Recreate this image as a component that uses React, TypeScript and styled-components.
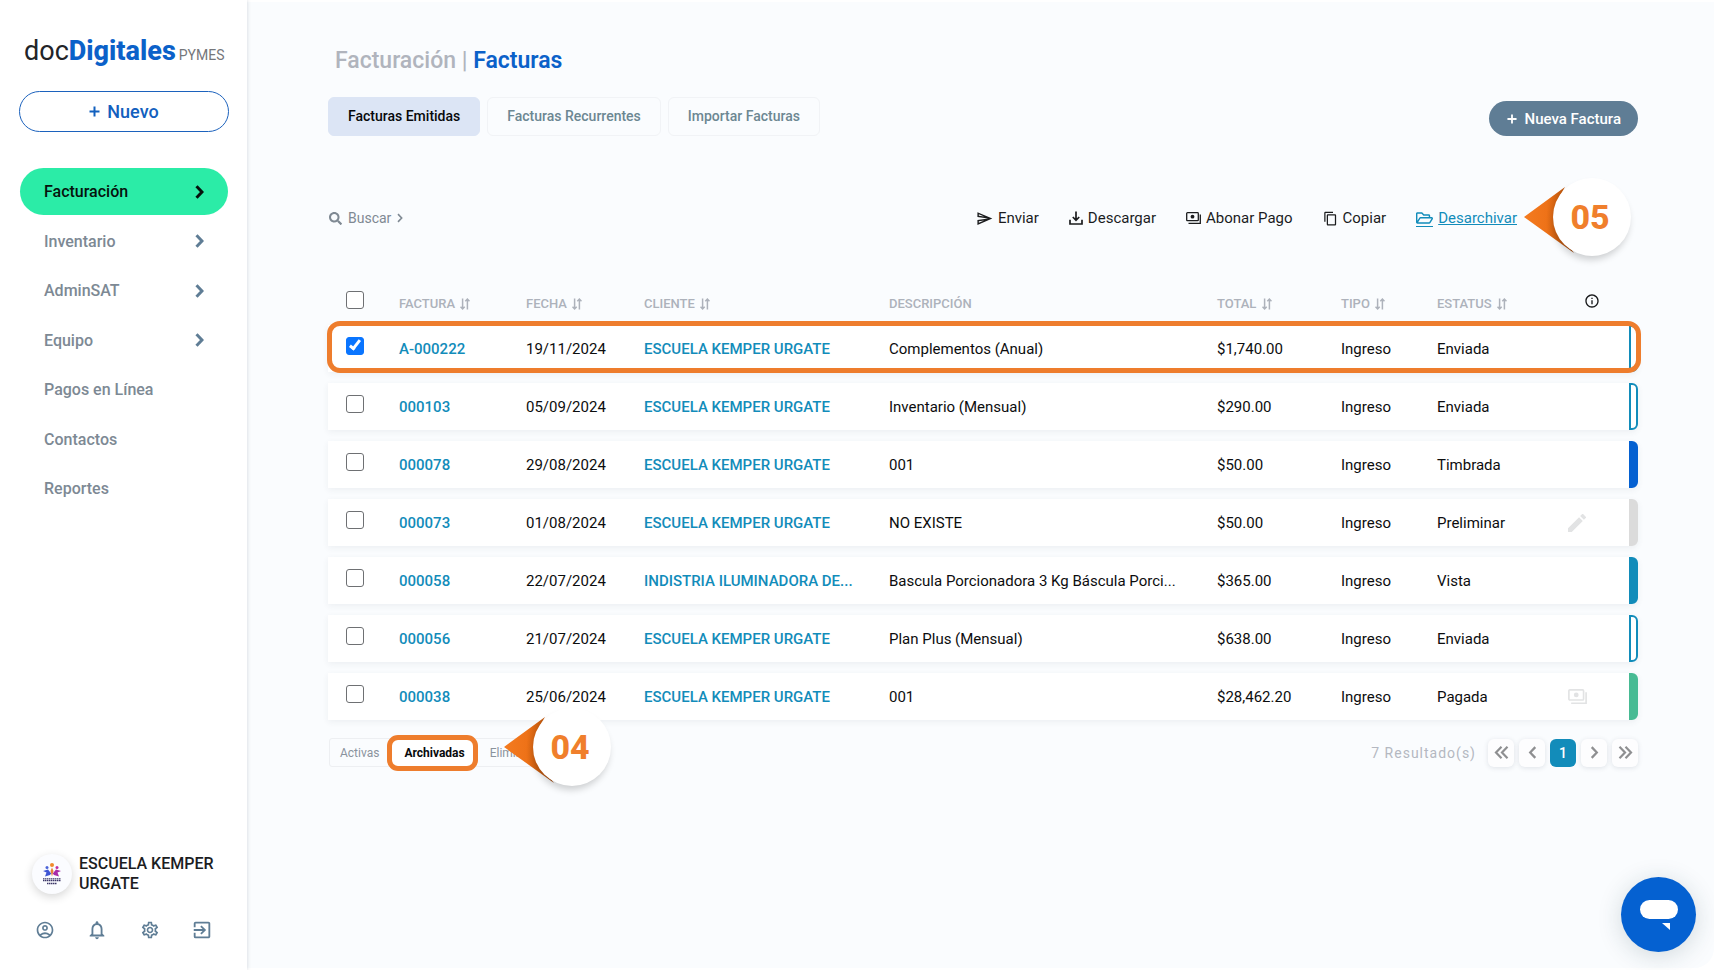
import React from "react";
import styled, { createGlobalStyle, css } from "styled-components";
import {
  MdOutlineAccountCircle,
  MdNotificationsNone,
  MdOutlineSettings,
  MdOutlineExitToApp,
  MdOutlineSend,
  MdContentCopy,
  MdInfoOutline,
} from "react-icons/md";
import { FaSearch, FaRegFolderOpen } from "react-icons/fa";

const GlobalStyle = createGlobalStyle`
  *, *::before, *::after { box-sizing: border-box; }
  body {
    margin: 0;
    background: #ffffff;
    color: #0c0d0e;
    font-family: Roboto, "Liberation Sans", sans-serif;
    font-size: 15px;
  }
  button { font-family: inherit; cursor: pointer; }
  a { text-decoration: none; }
`;

const accent = "#ee7d2d";
const teal = "#128cba";
const slate = "#5f7d95";

const Page = styled.div`
  display: flex;
  min-height: 100vh;
`;

/* ---------- Sidebar ---------- */

const Sidebar = styled.aside`
  display: flex;
  flex-direction: column;
  flex: none;
  width: 247px;
  padding: 33px 18px 28px 19px;
  background: #ffffff;
  box-shadow: 0 0 4px rgba(40, 60, 80, 0.2);
  z-index: 1;
`;

const Logo = styled.a`
  display: flex;
  align-items: baseline;
  height: 36px;
  padding-left: 5px;
  line-height: 36px;
  color: #222428;
  font-size: 27px;
  font-weight: 400;
  white-space: nowrap;

  strong { color: #0b61c9; font-weight: 800; }
  small {
    margin-left: 3px;
    color: #75777b;
    font-size: 14px;
    font-weight: 400;
  }
`;

const NewButton = styled.button`
  display: flex;
  align-items: center;
  justify-content: center;
  gap: 7px;
  height: 41px;
  margin-top: 22px;
  border: 1px solid #1c62bd;
  border-radius: 21px;
  background: #ffffff;
  color: #1260be;
  font-size: 18px;
  font-weight: 500;
`;

const Nav = styled.nav`
  display: flex;
  flex-direction: column;
  justify-content: space-between;
  height: 344px;
  margin: 36px 1px 0;
`;

const NavItem = styled.a<{ $active?: boolean }>`
  display: flex;
  align-items: center;
  justify-content: space-between;
  height: 47px;
  padding: 0 24px;
  border-radius: 24px;
  font-size: 16px;
  font-weight: 500;
  color: ${(p) => (p.$active ? "#06120d" : "#7d8994")};
  background: ${(p) => (p.$active ? "#2beca7" : "transparent")};
  svg { color: ${(p) => (p.$active ? "#06120d" : slate)}; }
`;

const Account = styled.div`
  display: flex;
  align-items: center;
  gap: 7px;
  margin-top: auto;
  padding-left: 13px;
  font-size: 16px;
  line-height: 20px;
  font-weight: 500;
  color: #1c1d1f;
`;

const Avatar = styled.span`
  display: grid;
  place-items: center;
  flex: none;
  width: 40px;
  height: 40px;
  border-radius: 50%;
  background: #fbfcff;
  box-shadow: 0 3px 10px rgba(0, 0, 0, 0.16);
`;

const AccountTools = styled.div`
  display: flex;
  justify-content: space-between;
  margin-top: 24px;
  padding: 0 15px 0 14px;
`;

const ToolButton = styled.button`
  display: grid;
  place-items: center;
  width: 24px;
  height: 24px;
  padding: 0;
  border: 0;
  background: none;
  color: ${slate};
  font-size: 20px;
`;

/* ---------- Content ---------- */

const Main = styled.main`
  flex: 1;
  min-width: 0;
  margin: 2px 0;
  padding: 45px 76px 0 81px;
  border-radius: 0 0 20px 0;
  background: #fafcfe;
`;

const Title = styled.h1`
  margin: 0;
  padding-left: 7px;
  font-size: 23px;
  line-height: 28px;
  font-weight: 500;
  color: #b0b4bd;
  strong { font-weight: 600; color: #0b61c9; }
`;

const TabBar = styled.div`
  display: flex;
  align-items: center;
  justify-content: space-between;
  margin-top: 22px;
`;

const Tabs = styled.div`
  display: flex;
  gap: 7px;
`;

const Tab = styled.button<{ $active?: boolean }>`
  height: 39px;
  padding: 0 19px 1px;
  border: 1px solid ${(p) => (p.$active ? "#dce5f5" : "#f1f3f6")};
  border-radius: 6px;
  background: ${(p) => (p.$active ? "#dce5f5" : "transparent")};
  color: ${(p) => (p.$active ? "#08090b" : "#6c8792")};
  font-size: 14px;
  font-weight: 500;
`;

const PrimaryButton = styled.button`
  display: flex;
  align-items: center;
  gap: 8px;
  height: 35px;
  margin-top: 4px;
  padding: 0 17px 0 18px;
  border: 0;
  border-radius: 18px;
  background: ${slate};
  color: #ffffff;
  font-size: 15px;
  font-weight: 500;
`;

const Toolbar = styled.div`
  display: flex;
  align-items: center;
  justify-content: space-between;
  height: 32px;
  margin-top: 66px;
`;

const SearchButton = styled.button`
  display: flex;
  align-items: center;
  gap: 6px;
  padding: 0 1px;
  border: 0;
  background: none;
  color: #7f8993;
  font-size: 14px;
`;

const Actions = styled.div`
  position: relative;
  display: flex;
  gap: 30px;
  margin-right: 121px;
`;

const Action = styled.button<{ $active?: boolean }>`
  display: flex;
  align-items: center;
  gap: 5px;
  padding: 0;
  border: 0;
  background: none;
  color: ${(p) => (p.$active ? teal : "#1b1c1e")};
  font-size: 15px;
  line-height: 18px;
  ${(p) =>
    p.$active &&
    css`
      svg { border-bottom: 1px solid ${teal}; }
      span { text-decoration: underline; }
    `}
`;

const Table = styled.table`
  width: 100%;
  margin-top: 47px;
  border-spacing: 0 11px;
  table-layout: fixed;
`;

const Col = styled.col<{ $w?: string }>`
  width: ${(p) => p.$w ?? "auto"};
`;

const Th = styled.th`
  height: 22px;
  padding: 0;
  text-align: left;
  font-size: 13px;
  font-weight: 500;
  color: #adb2bb;
  white-space: nowrap;
  svg { margin-left: 2px; vertical-align: -2px; }
`;

const InfoIcon = styled(MdInfoOutline)`
  && {
    display: block;
    margin: -5px 0 0 16px;
    color: #17181a;
    font-size: 16px;
  }
`;

const Row = styled.tr<{ $marked?: boolean }>`
  position: relative;
  box-shadow: 0 2px 6px rgba(60, 70, 90, 0.07);
  border-radius: 0 6px 6px 0;
  ${(p) =>
    p.$marked &&
    css`
      td:first-child::after {
        content: "";
        position: absolute;
        inset: -4px -3px -1px -1px;
        border: 5px solid ${accent};
        border-radius: 13px;
        pointer-events: none;
      }
    `}
`;

const Td = styled.td`
  height: 47px;
  padding: 0;
  background: #ffffff;
  font-size: 15px;
  white-space: nowrap;
`;

const CellLink = styled.a`
  color: ${teal};
  font-weight: 500;
`;

const Check = styled.input`
  display: block;
  width: 18px;
  height: 18px;
  margin: -6px 0 0 18px;
  border: 1px solid #6e7073;
  border-radius: 3px;
  appearance: none;
  background: #ffffff;

  &:checked {
    border-color: #0a75ff;
    background: #0a75ff;
  }
  &:checked::after {
    content: "";
    display: block;
    width: 6px;
    height: 12px;
    margin: 0 0 0 5px;
    border: solid #ffffff;
    border-width: 0 3px 3px 0;
    transform: rotate(38deg);
  }
`;

const RowIcon = styled.span`
  display: flex;
  align-items: center;
  height: 20px;
  color: #e2e3e4;
`;

const StripCell = styled.td`
  height: 47px;
  padding: 0;
`;

const Strip = styled.div<{ $color: string; $hollow?: boolean }>`
  height: 47px;
  border: 2px solid ${(p) => p.$color};
  border-radius: 0 6px 6px 0;
  background: ${(p) => (p.$hollow ? "#ffffff" : p.$color)};
`;

const Footer = styled.div`
  display: flex;
  align-items: center;
  justify-content: space-between;
  margin-top: 7px;
`;

const Filters = styled.div`
  position: relative;
  display: flex;
  align-items: center;
  gap: 25px;
  height: 29px;
  margin-left: 1px;
  padding: 0 10px;
  border: 1px solid #edeff2;
  border-radius: 3px;
`;

const Filter = styled.button<{ $active?: boolean }>`
  position: relative;
  padding: 0;
  border: 0;
  background: none;
  color: ${(p) => (p.$active ? "#08090b" : "#8a939d")};
  font-size: 12px;
  line-height: 16px;
  font-weight: ${(p) => (p.$active ? 700 : 400)};
  ${(p) =>
    p.$active &&
    css`
      z-index: 0;
      &::before {
        content: "";
        position: absolute;
        z-index: -1;
        inset: -10px -13px -10px -17px;
        border: 5px solid ${accent};
        border-radius: 11px;
        background: #ffffff;
      }
    `}
`;

const Pager = styled.div`
  display: flex;
  align-items: center;
  gap: 5px;
`;

const Results = styled.span`
  margin-right: 7px;
  color: #b4b8c1;
  font-size: 14px;
  letter-spacing: 1px;
`;

const PageButton = styled.button<{ $active?: boolean }>`
  display: grid;
  place-items: center;
  width: 26px;
  height: 28px;
  padding: 0;
  border: 0;
  border-radius: 6px;
  background: ${(p) => (p.$active ? teal : "#fdfdfe")};
  box-shadow: ${(p) => (p.$active ? "none" : "0 1px 5px rgba(60, 70, 90, 0.14)")};
  color: ${(p) => (p.$active ? "#ffffff" : "#8e8f91")};
  font-size: 14px;
  font-weight: 500;
`;

/* Step marker that floats over the page */
const Marker = styled.div<{ $left: string; $top: string }>`
  position: absolute;
  left: ${(p) => p.$left};
  top: ${(p) => p.$top};
  width: 108px;
  height: 80px;
  z-index: 2;
  pointer-events: none;
  svg { position: absolute; left: 0; top: 0; overflow: visible; }
`;

const MarkerDisc = styled.span`
  position: absolute;
  left: 29px;
  top: 1px;
  display: grid;
  place-items: center;
  width: 78px;
  height: 78px;
  padding: 0 4px 0 0;
  border-radius: 50%;
  background: #ffffff;
  box-shadow: -1px 5px 7px -1px rgba(0, 0, 0, 0.18);
  color: #f07f2c;
  font-size: 34px;
  line-height: 40px;
  font-weight: 800;
`;

const ChatButton = styled.button`
  position: fixed;
  right: 18px;
  bottom: 18px;
  display: grid;
  place-items: center;
  width: 75px;
  height: 75px;
  padding: 0;
  border: 0;
  border-radius: 50%;
  background: #0561d1;
  box-shadow: 0 4px 24px rgba(30, 60, 70, 0.18);
`;

/* ---------- Drawings ---------- */

const Plus = ({ size = 11 }) => (
  <svg width={size} height={size} viewBox="0 0 11 11" fill="none" stroke="currentColor" strokeWidth="2" aria-hidden>
    <path d="M5.500 .5v10M.5 5.500h10" />
  </svg>
);

const Chevron = ({ w = 9, h = 14, stroke = 3, flip = false }) => (
  <svg width={w} height={h} viewBox="0 0 9 14" fill="none" stroke="currentColor" strokeWidth={stroke} aria-hidden>
    <path d={flip ? "M7.5 1.2 2 7l5.500 5.800" : "M1.500 1.200 7 7l-5.500 5.800"} />
  </svg>
);

const DoubleChevron = ({ flip = false }) => (
  <svg width="15" height="13" viewBox="0 0 15 13" fill="none" stroke="currentColor" strokeWidth="2.200" aria-hidden>
    <path d={flip ? "M7.500 .8 2 6.500l5.500 5.700M13.500 .8 8 6.500l5.500 5.700" : "M1.500 .8 7 6.500l-5.500 5.700M7.500 .8 13 6.500l-5.500 5.700"} />
  </svg>
);

const SortIcon = () => (
  <svg width="10" height="12" viewBox="0 0 10 12" fill="none" stroke="currentColor" strokeWidth="1.500" aria-hidden>
    <path d="M2.600 .5v10.300M.5 8.700l2.100 2.200 2.100-2.200M7.400 11.500V1.200M5.300 3.300l2.100-2.200 2.100 2.200" />
  </svg>
);

const DownloadIcon = () => (
  <svg width="14" height="14" viewBox="0 0 14 14" fill="none" stroke="currentColor" strokeWidth="1.700" aria-hidden>
    <path d="M7 .5v8.500M3.800 6 7 9.300 10.200 6M1 8.800V13h12V8.800" />
  </svg>
);

const PayIcon = ({ w = 15 }: { w?: number }) => (
  <svg width={w} height={(w * 12) / 15} viewBox="0 0 15 12" fill="none" stroke="currentColor" strokeWidth="1.300" aria-hidden>
    <rect x=".7" y=".7" width="11.600" height="8" rx=".8" />
    <circle cx="6.500" cy="4.700" r="1.900" fill="currentColor" stroke="none" />
    <path d="M14.300 2.500v8.800H2.500" />
  </svg>
);

const PencilIcon = () => (
  <svg width="18" height="18" viewBox="3 3 18 18" fill="currentColor" aria-hidden>
    <path d="M3 17.250V21h3.750L17.810 9.940l-3.750-3.750L3 17.250zM20.710 7.040a1 1 0 0 0 0-1.410l-2.340-2.340a1 1 0 0 0-1.410 0l-1.830 1.830 3.750 3.750 1.830-1.830z" />
  </svg>
);

const SchoolCrest = () => (
  <svg width="20" height="24" viewBox="0 0 20 24" aria-hidden>
    <circle cx="10" cy="3" r="2" fill="#f08a2c" />
    <circle cx="5" cy="5.500" r="1.500" fill="#4a63d8" />
    <circle cx="15" cy="5.500" r="1.500" fill="#c02fa5" />
    <path d="M10 5.500 8.500 9l1.500 5.500 1.500-5.500z" fill="#e8803a" />
    <path d="M1 9 6 7.500l3.200 4-1.200 1.500L3 14.500l1.500-4z" fill="#3f56d4" />
    <path d="M19 9 14 7.500l-3.200 4 1.200 1.500 5 1.500-1.500-4z" fill="#a92aa8" />
    <path d="M1 16.800h18M1 18.600h18" stroke="#3a3566" strokeWidth="1.300" strokeDasharray="1.500 .5" />
    <path d="M5 21.500h10" stroke="#3a3566" strokeWidth="1.400" strokeDasharray="1.500 .5" />
  </svg>
);

const StepMarker = ({ n, left, top }: { n: string; left: string; top: string }) => (
  <Marker $left={left} $top={top}>
    <svg width="60" height="80" viewBox="0 0 60 80" aria-hidden>
      <defs>
        <linearGradient id={`fold-${n}`} x1="0" y1="0" x2="1" y2="0">
          <stop offset="0" stopColor="#f47b20" />
          <stop offset=".45" stopColor="#ee7218" />
          <stop offset="1" stopColor="#a04708" />
        </linearGradient>
      </defs>
      <path d="M0 40 41 10Q20 40 50 76Z" fill={`url(#fold-${n})`} />
    </svg>
    <MarkerDisc>{n}</MarkerDisc>
  </Marker>
);

/* ---------- Data ---------- */

const navItems = [
  { label: "Facturación", more: true, active: true },
  { label: "Inventario", more: true },
  { label: "AdminSAT", more: true },
  { label: "Equipo", more: true },
  { label: "Pagos en Línea" },
  { label: "Contactos" },
  { label: "Reportes" },
];

const kemper = "ESCUELA KEMPER URGATE";

const invoices = [
  { id: "A-000222", date: "19/11/2024", client: kemper, text: "Complementos (Anual)", total: "$1,740.00", status: "Enviada" },
  { id: "000103", date: "05/09/2024", client: kemper, text: "Inventario (Mensual)", total: "$290.00", status: "Enviada" },
  { id: "000078", date: "29/08/2024", client: kemper, text: "001", total: "$50.00", status: "Timbrada" },
  { id: "000073", date: "01/08/2024", client: kemper, text: "NO EXISTE", total: "$50.00", status: "Preliminar" },
  { id: "000058", date: "22/07/2024", client: "INDISTRIA ILUMINADORA DE...", text: "Bascula Porcionadora 3 Kg Báscula Porci...", total: "$365.00", status: "Vista" },
  { id: "000056", date: "21/07/2024", client: kemper, text: "Plan Plus (Mensual)", total: "$638.00", status: "Enviada" },
  { id: "000038", date: "25/06/2024", client: kemper, text: "001", total: "$28,462.20", status: "Pagada" },
];

const statusColor: Record<string, string> = {
  Enviada: teal,
  Timbrada: "#0561d1",
  Preliminar: "#dbdbdb",
  Vista: teal,
  Pagada: "#48bb94",
};

const columns = [
  { label: "FACTURA", sort: true },
  { label: "FECHA", sort: true },
  { label: "CLIENTE", sort: true },
  { label: "DESCRIPCIÓN" },
  { label: "TOTAL", sort: true },
  { label: "TIPO", sort: true },
  { label: "ESTATUS", sort: true },
];

export default function App() {
  return (
    <>
      <GlobalStyle />
      <Page>
        <Sidebar>
          <Logo href="#">
            doc<strong>Digitales</strong>
            <small>PYMES</small>
          </Logo>
          <NewButton>
            <Plus /> Nuevo
          </NewButton>
          <Nav>
            {navItems.map((n) => (
              <NavItem key={n.label} href="#" $active={n.active}>
                {n.label}
                {n.more && <Chevron />}
              </NavItem>
            ))}
          </Nav>
          <Account>
            <Avatar>
              <SchoolCrest />
            </Avatar>
            <span>{kemper}</span>
          </Account>
          <AccountTools>
            <ToolButton aria-label="Perfil"><MdOutlineAccountCircle /></ToolButton>
            <ToolButton aria-label="Notificaciones"><MdNotificationsNone size={22} /></ToolButton>
            <ToolButton aria-label="Configuración"><MdOutlineSettings /></ToolButton>
            <ToolButton aria-label="Salir"><MdOutlineExitToApp size={22} /></ToolButton>
          </AccountTools>
        </Sidebar>

        <Main>
          <Title>
            Facturación | <strong>Facturas</strong>
          </Title>
          <TabBar>
            <Tabs>
              <Tab $active>Facturas Emitidas</Tab>
              <Tab>Facturas Recurrentes</Tab>
              <Tab>Importar Facturas</Tab>
            </Tabs>
            <PrimaryButton>
              <Plus size={10} /> Nueva Factura
            </PrimaryButton>
          </TabBar>

          <Toolbar>
            <SearchButton>
              <FaSearch size={13} /> Buscar <Chevron w={6} h={10} stroke={2.4} />
            </SearchButton>
            <Actions>
              <Action><MdOutlineSend size={17} /><span>Enviar</span></Action>
              <Action><DownloadIcon /><span>Descargar</span></Action>
              <Action><PayIcon /><span>Abonar Pago</span></Action>
              <Action><MdContentCopy size={15} /><span>Copiar</span></Action>
              <Action $active><FaRegFolderOpen size={17} /><span>Desarchivar</span></Action>
              <StepMarker n="05" left="calc(100% + 7px)" top="-32px" />
            </Actions>
          </Toolbar>

          <Table>
            <colgroup>
              <Col $w="71px" />
              <Col $w="127px" />
              <Col $w="118px" />
              <Col $w="245px" />
              <Col />
              <Col $w="124px" />
              <Col $w="96px" />
              <Col $w="131px" />
              <Col $w="61px" />
              <Col $w="9px" />
            </colgroup>
            <thead>
              <tr>
                <Th><Check type="checkbox" aria-label="Seleccionar todas" /></Th>
                {columns.map((c) => (
                  <Th key={c.label} scope="col">
                    {c.label} {c.sort && <SortIcon />}
                  </Th>
                ))}
                <Th><InfoIcon /></Th>
                <Th />
              </tr>
            </thead>
            <tbody>
              {invoices.map((r, i) => (
                <Row key={r.id} $marked={i === 0}>
                  <Td><Check type="checkbox" defaultChecked={i === 0} aria-label={`Seleccionar ${r.id}`} /></Td>
                  <Td><CellLink href="#">{r.id}</CellLink></Td>
                  <Td>{r.date}</Td>
                  <Td><CellLink href="#">{r.client}</CellLink></Td>
                  <Td>{r.text}</Td>
                  <Td>{r.total}</Td>
                  <Td>Ingreso</Td>
                  <Td>{r.status}</Td>
                  <Td>
                    {r.status === "Preliminar" && <RowIcon><PencilIcon /></RowIcon>}
                    {r.status === "Pagada" && <RowIcon><PayIcon w={19} /></RowIcon>}
                  </Td>
                  <StripCell>
                    <Strip $color={statusColor[r.status]} $hollow={r.status === "Enviada"} />
                  </StripCell>
                </Row>
              ))}
            </tbody>
          </Table>

          <Footer>
            <Filters>
              <Filter>Activas</Filter>
              <Filter $active>Archivadas</Filter>
              <Filter>Eliminadas</Filter>
              <StepMarker n="04" left="174px" top="-32px" />
            </Filters>
            <Pager>
              <Results>7 Resultado(s)</Results>
              <PageButton aria-label="Primera"><DoubleChevron flip /></PageButton>
              <PageButton aria-label="Anterior"><Chevron w={9} h={13} stroke={2.4} flip /></PageButton>
              <PageButton $active>1</PageButton>
              <PageButton aria-label="Siguiente"><Chevron w={9} h={13} stroke={2.4} /></PageButton>
              <PageButton aria-label="Última"><DoubleChevron /></PageButton>
            </Pager>
          </Footer>
        </Main>
      </Page>
      <ChatButton aria-label="Chat">
        <svg width="38" height="32" viewBox="0 0 38 32" aria-hidden>
          <rect x="0" y="1" width="38" height="19" rx="9.500" fill="#ffffff" />
          <path d="M22 24h8v7z" fill="#ffffff" />
        </svg>
      </ChatButton>
    </>
  );
}
